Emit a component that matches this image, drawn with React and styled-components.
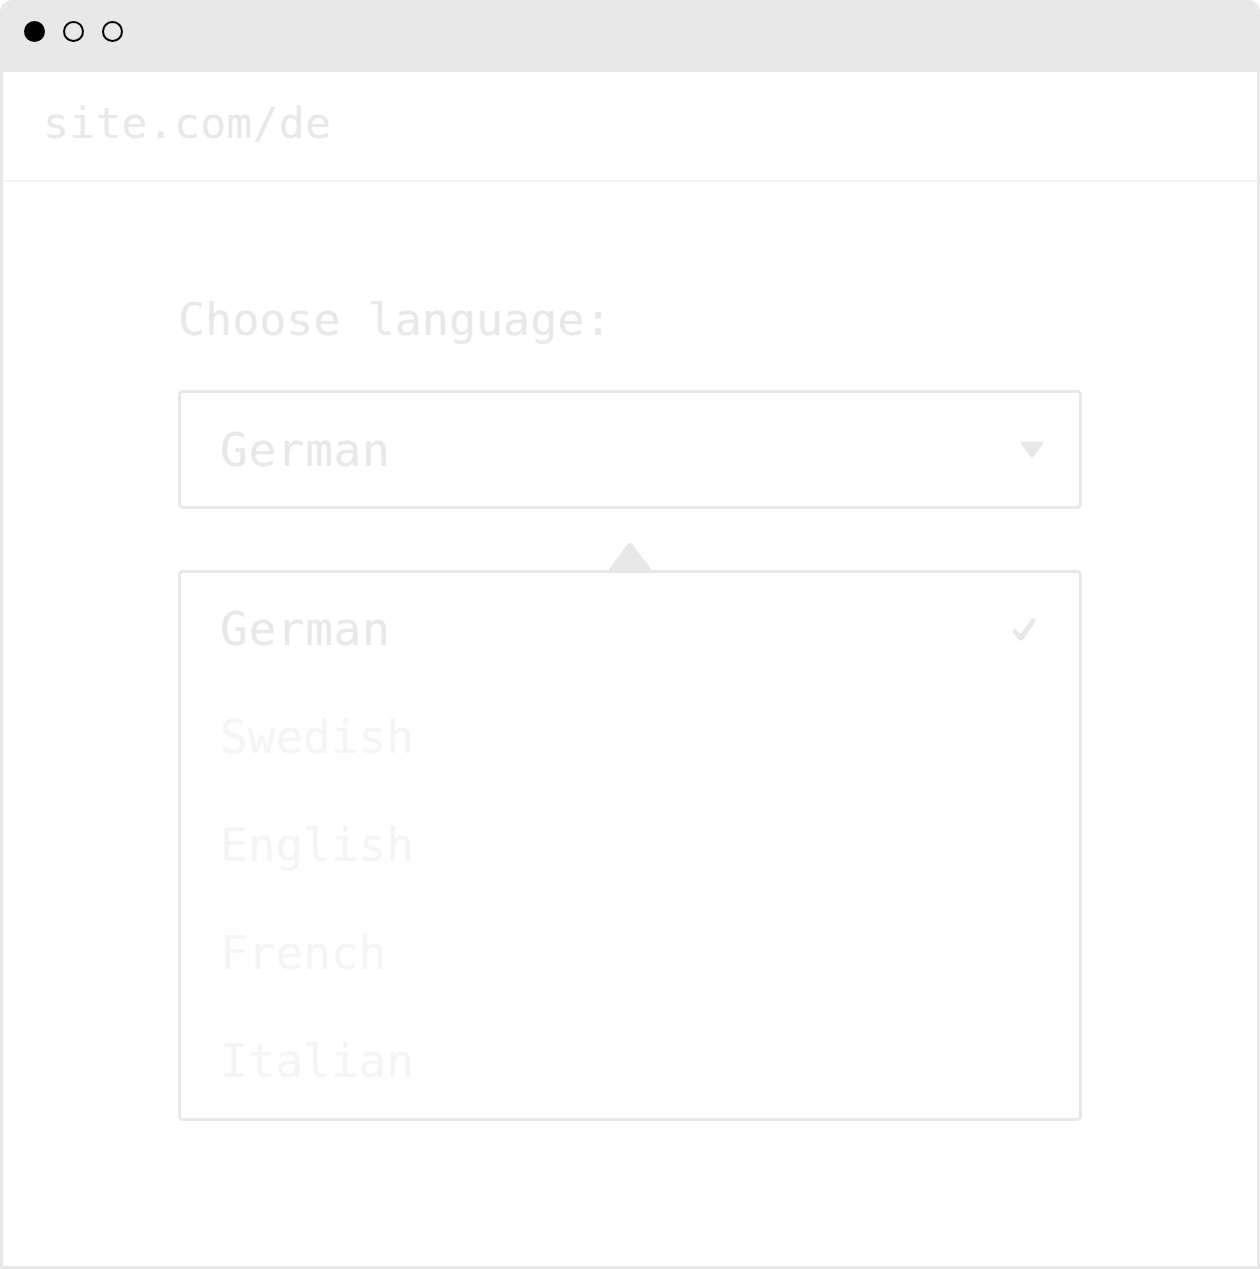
import React from 'react';
import styled, { createGlobalStyle } from 'styled-components';

const GlobalStyle = createGlobalStyle`
  html, body {
    margin: 0;
    padding: 0;
    background: #ffffff;
  }
  body {
    font-family: "DejaVu Sans Mono", "Liberation Mono", monospace;
  }
`;

const Window = styled.div`
  box-sizing: border-box;
  width: 1260px;
  height: 1269px;
  display: flex;
  flex-direction: column;
  border: 3px solid #e8e8e8;
  border-top: none;
  border-radius: 12px 12px 0 0;
  overflow: hidden;
  background: #ffffff;
`;

const TitleBar = styled.div`
  height: 72px;
  margin: 0 -3px;
  background: #e8e8e8;
  display: flex;
  align-items: center;
  gap: 18px;
  padding: 0 0 10px 24px;
  box-sizing: border-box;
  flex-shrink: 0;
`;

const Dot = styled.span`
  box-sizing: border-box;
  width: 21px;
  height: 21px;
  border-radius: 50%;
  border: 2.5px solid #000;
  background: ${(p) => (p.$filled ? '#000' : 'transparent')};
`;

const AddressBar = styled.div`
  height: 110px;
  flex-shrink: 0;
  box-sizing: border-box;
  border-bottom: 2px solid #f4f4f4;
  display: flex;
  align-items: center;
  padding: 0 0 6px 40px;
  font-size: 43px;
  letter-spacing: 0.3px;
  color: #e8e8e8;
`;

const Content = styled.div`
  display: flex;
  flex-direction: column;
  padding: 108px 0 0 175px;
  width: 904px;
`;

const Heading = styled.div`
  font-size: 45px;
  line-height: 60px;
  color: #e8e8e8;
  margin-bottom: 40px;
`;

const Select = styled.div`
  box-sizing: border-box;
  height: 119px;
  border: 3px solid #e8e8e8;
  border-radius: 5px;
  display: flex;
  align-items: center;
  justify-content: space-between;
  padding: 0 34px 0 39px;
`;

const ItemText = styled.span`
  font-size: 46px;
  letter-spacing: ${(p) => (p.$active ? '0.7px' : '0')};
  color: ${(p) => (p.$active ? '#e8e8e8' : '#f5f5f5')};
`;

const Popover = styled.div`
  position: relative;
  margin-top: 61px;
`;

const Caret = styled.svg`
  position: absolute;
  top: -29px;
  left: 50%;
  margin-left: -22px;
`;

const List = styled.ul`
  list-style: none;
  margin: 0;
  box-sizing: border-box;
  height: 551px;
  border: 3px solid #e8e8e8;
  border-radius: 5px;
  padding: 2px 0;
`;

const Row = styled.li`
  height: 108px;
  display: flex;
  align-items: center;
  justify-content: space-between;
  padding: 0 40px 0 39px;
`;

const CheckMark = styled.svg`
  margin-top: 6px;
`;

const languages = ['German', 'Swedish', 'English', 'French', 'Italian'];

function App() {
  const selected = 'German';

  return (
    <>
      <GlobalStyle />
      <Window>
        <TitleBar>
          <Dot $filled />
          <Dot />
          <Dot />
        </TitleBar>
        <AddressBar>site.com/de</AddressBar>
        <Content>
          <Heading>Choose language:</Heading>
          <Select>
            <ItemText $active>{selected}</ItemText>
            <svg width="26" height="18" viewBox="0 0 26 18">
              <path d="M3 2 H23 L13 15 Z" fill="#e8e8e8" stroke="#e8e8e8" strokeWidth="3" strokeLinejoin="round" />
            </svg>
          </Select>
          <Popover>
            <Caret width="44" height="32" viewBox="0 0 44 32">
              <path d="M1 32 L1 28 L19 4 Q22 0 25 4 L43 28 L43 32 Z" fill="#e8e8e8" />
            </Caret>
            <List>
              {languages.map((lang) => (
                <Row key={lang}>
                  <ItemText $active={lang === selected}>{lang}</ItemText>
                  {lang === selected && (
                    <CheckMark width="30" height="30" viewBox="0 0 30 30">
                      <path d="M6 15 L12 21 L24 4" fill="none" stroke="#e8e8e8" strokeWidth="5" strokeLinecap="round" strokeLinejoin="round" />
                    </CheckMark>
                  )}
                </Row>
              ))}
            </List>
          </Popover>
        </Content>
      </Window>
    </>
  );
}

export default App;
